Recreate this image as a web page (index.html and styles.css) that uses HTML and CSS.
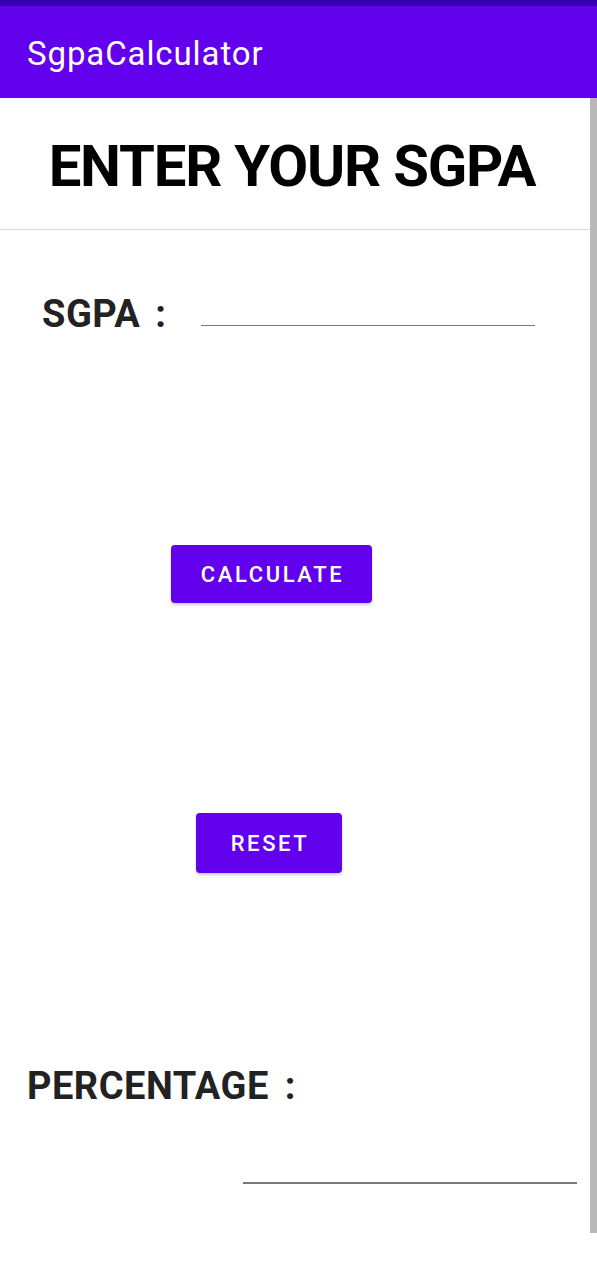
FILE: index.html
```html
<!DOCTYPE html>
<html>
<head>
<meta charset="utf-8">
<link rel="stylesheet" href="styles.css">
</head>
<body>
<div class="status"></div>
<header class="appbar"><span class="app-title">SgpaCalculator</span></header>
<div class="screen">
  <main class="content">
    <section class="heading"><h1>ENTER YOUR SGPA</h1></section>
    <div class="sgpa-row">
      <span class="label">SGPA :</span>
      <span class="field sgpa-field"></span>
    </div>
    <div class="btn-row calc-row"><button class="btn calc">CALCULATE</button></div>
    <div class="btn-row reset-row"><button class="btn reset">RESET</button></div>
    <div class="pct-label"><span class="label">PERCENTAGE :</span></div>
    <div class="pct-row"><span class="field pct-field"></span></div>
  </main>
  <div class="scrollbar"></div>
</div>
</body>
</html>
```

FILE: styles.css
```css
* { box-sizing: border-box; }
html, body { margin: 0; padding: 0; background: #fff; }
body { width: 597px; height: 1280px; font-family: Roboto, "Noto Sans", sans-serif; overflow: hidden; }
.status { height: 6px; background: #3700B3; }
.appbar { height: 92px; background: #6200EE; display: flex; align-items: center; padding-left: 27px; padding-top: 2px; }
.app-title { color: #fff; font-size: 33px; font-weight: 400; letter-spacing: 0.9px; }
.screen { display: flex; align-items: flex-start; }
.content { width: 590px; display: flex; flex-direction: column; }
.scrollbar { width: 7px; height: 1135px; background: #b9b9b9; }
.heading { height: 132px; border-bottom: 1px solid #dcdcdc; display: flex; align-items: center; justify-content: center; padding-top: 4px; padding-right: 6px; }
.heading h1 { margin: 0; font-size: 58px; font-weight: 700; color: #000; letter-spacing: -1.2px; }
.label { font-weight: 700; color: #222; font-size: 38px; letter-spacing: 0.5px; word-spacing: 5px; }
.sgpa-row { display: flex; align-items: flex-end; padding-left: 42px; margin-top: 66px; height: 40px; }
.field { display: block; height: 1.5px; background: #7a7a7a; }
.sgpa-field { width: 334px; margin-left: 35px; margin-bottom: 10px; }
.btn-row { display: flex; }
.btn { border: none; border-radius: 4px; background: #6200EE; color: #fff; font-family: Roboto, sans-serif; font-weight: 500; font-size: 22px; letter-spacing: 2.6px; box-shadow: 0 2px 3px rgba(0,0,0,0.2); padding: 0 0 0 2px; }
.calc-row { padding-left: 171px; margin-top: 209px; }
.calc { width: 201px; height: 58px; }
.reset-row { padding-left: 196px; margin-top: 210px; }
.reset { width: 146px; height: 60px; }
.pct-label { padding-left: 27px; margin-top: 191px; height: 40px; }
.pct-label .label { word-spacing: 6px; }
.pct-row { padding-left: 243px; margin-top: 78px; }
.pct-field { width: 334px; }
```
